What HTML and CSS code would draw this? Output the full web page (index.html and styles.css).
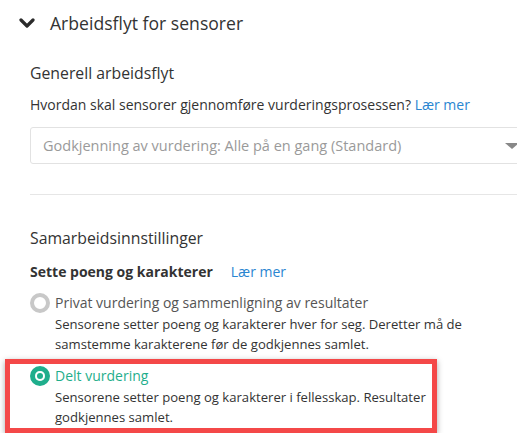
FILE: index.html
```html
<!DOCTYPE html>
<html lang="no">
<head>
    <meta charset="UTF-8">
    <title>Arbeidsflyt for sensorer</title>
    <link rel="stylesheet" href="styles.css">
</head>
<body>
    <div class="section-header">
        <svg class="chevron" width="16" height="12" viewBox="0 0 16 12">
            <path d="M2 3 L8 9 L14 3" fill="none" stroke="#2b2b2b" stroke-width="3.2" stroke-linecap="round" stroke-linejoin="round"/>
        </svg>
        <h1>Arbeidsflyt for sensorer</h1>
    </div>

    <div class="section-body">
        <h2>Generell arbeidsflyt</h2>
        <p class="question">Hvordan skal sensorer gjennomføre vurderingsprosessen? <a href="#">Lær mer</a></p>
        <div class="select-box">
            <span>Godkjenning av vurdering: Alle på en gang (Standard)</span>
            <span class="arrow"></span>
        </div>

        <hr class="divider">

        <h2>Samarbeidsinnstillinger</h2>
        <div class="field-label">
            <strong>Sette poeng og karakterer</strong>
            <a href="#">Lær mer</a>
        </div>

        <div class="option">
            <span class="radio"></span>
            <div class="option-text">
                <div class="option-title">Privat vurdering og sammenligning av resultater</div>
                <div class="option-desc">Sensorene setter poeng og karakterer hver for seg. Deretter må de samstemme karakterene før de godkjennes samlet.</div>
            </div>
        </div>

        <div class="highlight">
            <div class="option selected">
                <span class="radio"></span>
                <div class="option-text">
                    <div class="option-title">Delt vurdering</div>
                    <div class="option-desc">Sensorene setter poeng og karakterer i fellesskap. Resultater godkjennes samlet.</div>
                </div>
            </div>
        </div>
    </div>
</body>
</html>
```

FILE: styles.css
```css
body {
    font-family: "Open Sans", "Liberation Sans", sans-serif;
    background-color: #ffffff;
    color: #333;
    margin: 0;
    padding: 0;
    overflow: hidden;
}
a {
    color: #2a86d1;
    text-decoration: none;
}
.section-header {
    display: flex;
    align-items: center;
    gap: 15px;
    padding: 9px 0 0 19px;
}
.section-header h1 {
    margin: 0;
    font-size: 17.6px;
    font-weight: 400;
    line-height: 28px;
    color: #333;
}
.section-body {
    padding-left: 30px;
}
h2 {
    margin: 0;
    font-size: 15.8px;
    font-weight: 400;
    color: #333;
}
.section-body > h2:first-child {
    margin-top: 25px;
    line-height: 22px;
}
.question {
    margin: 11px 0 0;
    font-size: 14px;
    line-height: 20px;
}
.select-box {
    display: flex;
    align-items: center;
    justify-content: space-between;
    height: 35px;
    margin-top: 12px;
    margin-right: -20px;
    padding: 0 10px 0 12px;
    border: 1px solid #e2e2e2;
    border-radius: 3px;
    font-size: 14.5px;
    color: #9a9a9a;
}
.arrow {
    width: 0;
    height: 0;
    margin-right: 7px;
    border-left: 7px solid transparent;
    border-right: 7px solid transparent;
    border-top: 6px solid #888;
}
.divider {
    margin: 30px 0 0;
    border: 0;
    border-top: 1px solid #e6e6e6;
}
.divider + h2 {
    margin-top: 32px;
    line-height: 22px;
}
.field-label {
    display: flex;
    gap: 18px;
    margin-top: 12px;
    font-size: 14px;
    line-height: 22px;
}
.field-label strong {
    font-weight: 700;
    color: #333;
}
.option {
    display: flex;
    gap: 5px;
    margin-top: 9px;
}
.radio {
    flex: none;
    box-sizing: border-box;
    width: 20px;
    height: 20px;
    margin-top: 1px;
    border: 4px solid #c8c8c8;
    border-radius: 50%;
    background: #fff;
}
.option-title {
    font-size: 14px;
    line-height: 22px;
    color: #555;
}
.option-desc {
    font-size: 13.1px;
    line-height: 20px;
    color: #333;
}
.highlight {
    width: 402px;
    margin: 5px 0 0 -25px;
    padding: 0 0 1px 20px;
    border: 5px solid #f44848;
    box-shadow: 0 2px 6px rgba(0, 0, 0, 0.35);
}
.highlight .option {
    margin-top: 1px;
}
.selected .radio {
    border: 5px solid #1fae8c;
    position: relative;
}
.selected .radio::after {
    content: "";
    position: absolute;
    top: 0;
    left: 0;
    width: 10px;
    height: 10px;
    border-radius: 50%;
    background: #1fae8c;
    box-shadow: inset 0 0 0 2px #fff;
}
.selected .option-title {
    color: #1fae8c;
}
```
